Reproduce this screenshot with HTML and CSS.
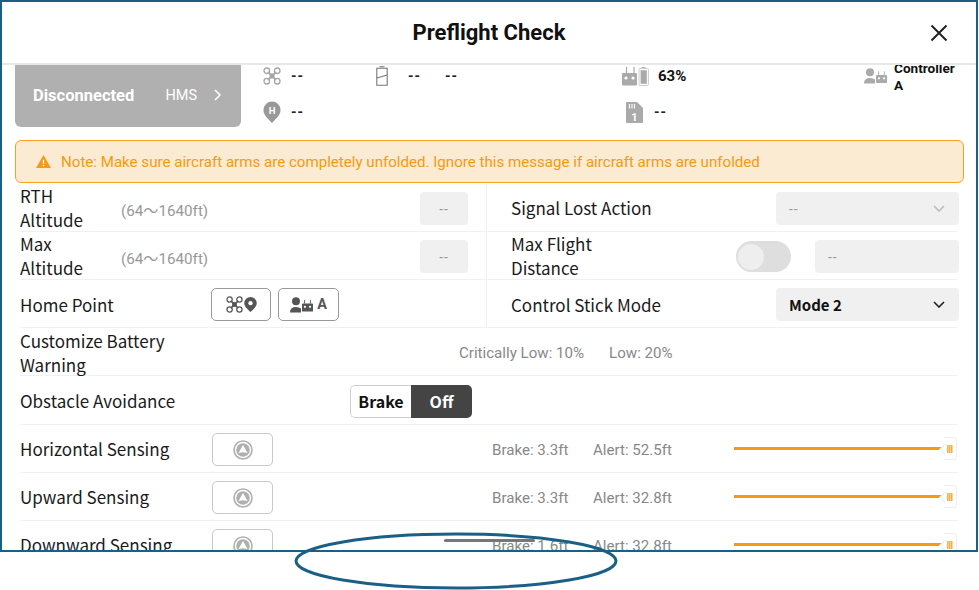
FILE: index.html
```html
<!DOCTYPE html>
<html lang="en">
<head>
    <meta charset="UTF-8">
    <meta name="viewport" content="width=device-width, initial-scale=1.0">
    <title>Preflight Check</title>
    <link rel="stylesheet" href="styles.css">
</head>
<body>

<svg width="0" height="0" class="defs">
    <symbol id="drone" viewBox="0 0 18 18">
        <g fill="none" stroke="currentColor" stroke-width="1.3">
            <circle cx="3.8" cy="3.8" r="2.8"/>
            <circle cx="14.200" cy="3.8" r="2.8"/>
            <circle cx="3.8" cy="14.200" r="2.8"/>
            <circle cx="14.200" cy="14.200" r="2.8"/>
            <path d="M5 5l8 8M13 5l-8 8" stroke-width="1.700"/>
        </g>
        <rect x="6.5" y="6.5" width="5" height="5" fill="currentColor"/>
    </symbol>
    <symbol id="sensor" viewBox="0 0 20 20">
        <circle cx="10" cy="10" r="9" fill="none" stroke="currentColor" stroke-width="1.600"/>
        <circle cx="10" cy="10" r="6.800" fill="currentColor"/>
        <path d="M10 5l4.600 8.300q-4.600-2-9.200 0z" fill="#fff"/>
    </symbol>
    <symbol id="remote" viewBox="0 0 15 16">
        <path d="M3.5 0v5M11.5 0v5" stroke="currentColor" stroke-width="1.2"/>
        <path d="M1 5h13a1 1 0 0 1 1 1v9a1 1 0 0 1-1 1H1a1 1 0 0 1-1-1V6a1 1 0 0 1 1-1z" fill="currentColor"/>
        <circle cx="4" cy="9.5" r="1.5" fill="#fff"/>
        <circle cx="11" cy="9.5" r="1.5" fill="#fff"/>
    </symbol>
</svg>

<div class="screen">
    <div class="dialog">
        <header class="dialog-head">
            <h1>Preflight Check</h1>
            <svg class="close" viewBox="0 0 18 18" width="18" height="18">
                <path d="M1.5 1.5l15 15M16.5 1.5l-15 15" stroke="#222" stroke-width="2" fill="none"/>
            </svg>
        </header>

        <div class="dialog-body">
            <div class="status">
                <div class="status-card">
                    <b>Disconnected</b>
                    <span class="hms">HMS</span>
                    <svg class="chevron" viewBox="0 0 8 12" width="8" height="12">
                        <path d="M1 1l5 5-5 5" stroke="#fff" stroke-width="1.5" fill="none"/>
                    </svg>
                </div>
                <div class="status-grid">
                    <div class="stat stat-a">
                        <svg class="ico-grey" width="18" height="18"><use href="#drone"/></svg>
                        <span class="dash">--</span>
                    </div>
                    <div class="stat stat-b">
                        <svg viewBox="0 0 12 20" width="12" height="20">
                            <path d="M3.5 .8h5M.8 2.300h10.400v17H.8zM.8 12l10.400-3" fill="none" stroke="#777" stroke-width="1.100"/>
                        </svg>
                        <span class="dash">--</span>
                        <span class="dash dash-far">--</span>
                    </div>
                    <div class="stat stat-c">
                        <svg viewBox="0 0 27 19" width="27" height="19">
                            <path d="M4.500 0v6M12 0v6" stroke="#aaa" stroke-width="1.200"/>
                            <rect x="0" y="6" width="15" height="12.500" rx="1" fill="#aaa"/>
                            <circle cx="4" cy="11" r="1.600" fill="#fff"/>
                            <circle cx="11" cy="11" r="1.600" fill="#fff"/>
                            <path d="M19.500 .6h4" stroke="#aaa"/>
                            <rect x="17" y="1.500" width="9.400" height="17" rx="1" fill="#fff" stroke="#ccc"/>
                            <rect x="18.600" y="3.200" width="6.200" height="13.600" fill="#aaa"/>
                        </svg>
                        <b class="percent">63%</b>
                    </div>
                    <div class="stat stat-d">
                        <svg class="person-rc" viewBox="0 0 23 16" width="23" height="16">
                            <circle cx="6" cy="4.200" r="4" fill="#aaa"/>
                            <path d="M0 15.500q0-5.500 6-5.500 3.200 0 5 1.500v4z" fill="#aaa"/>
                            <svg x="12" y="3" width="11" height="12.500" color="#aaa"><use href="#remote"/></svg>
                        </svg>
                        <b class="controller">Controller<br>A</b>
                    </div>
                    <div class="stat stat-a">
                        <svg viewBox="0 0 18 22" width="18" height="22">
                            <path d="M9 22C5 17.500.5 14.500.5 9a8.500 8.500 0 0 1 17 0C17.500 14.500 13 17.500 9 22z" fill="#999"/>
                            <text x="9" y="12.500" class="pin-h">H</text>
                        </svg>
                        <span class="dash">--</span>
                    </div>
                    <div class="stat stat-b"></div>
                    <div class="stat stat-sd">
                        <svg viewBox="0 0 17 21" width="17" height="21">
                            <path d="M1 0h10l6 6v14a1 1 0 0 1-1 1H1a1 1 0 0 1-1-1V1a1 1 0 0 1 1-1z" fill="#aaa"/>
                            <path d="M3.500 2v4.500M6 2v4.500M8.500 2v4.500" stroke="#fff" stroke-width="1.100"/>
                            <text x="8.500" y="18.500" class="sd-num">1</text>
                        </svg>
                        <span class="dash">--</span>
                    </div>
                    <div class="stat stat-d"></div>
                </div>
            </div>

            <div class="notice">
                <svg viewBox="0 0 16 14" width="15" height="13">
                    <path d="M8 0l8 14H0z" fill="#f59a12"/>
                    <path d="M8 5v4.500M8 10.500v1.500" stroke="#fff" stroke-width="1.400"/>
                </svg>
                <span>Note: Make sure aircraft arms are completely unfolded. Ignore this message if aircraft arms are unfolded</span>
            </div>

            <div class="split">
                <div class="row cell-left">
                    <div class="label label-up label-narrow">RTH<br>Altitude</div>
                    <div class="range">(64～1640ft)</div>
                    <div class="input input-small">--</div>
                </div>
                <div class="row cell-right">
                    <div class="label label-up">Signal Lost Action</div>
                    <div class="input select">
                        <span>--</span>
                        <svg viewBox="0 0 12 7" width="12" height="7"><path d="M1 1l5 5 5-5" stroke="#bbb" stroke-width="1.500" fill="none"/></svg>
                    </div>
                </div>
                <div class="row cell-left">
                    <div class="label label-up label-narrow">Max<br>Altitude</div>
                    <div class="range">(64～1640ft)</div>
                    <div class="input input-small">--</div>
                </div>
                <div class="row cell-right">
                    <div class="label label-up label-flight">Max Flight<br>Distance</div>
                    <div class="toggle"><i></i></div>
                    <div class="input input-wide">--</div>
                </div>
                <div class="row cell-left">
                    <div class="label label-home">Home Point</div>
                    <div class="btn-outline dark">
                        <svg width="17" height="17" color="#555"><use href="#drone"/></svg>
                        <svg viewBox="0 0 12 14" width="13" height="15">
                            <path d="M6 14C3 11 .2 9 .2 5.800a5.800 5.800 0 0 1 11.600 0C11.800 9 9 11 6 14z" fill="#555"/>
                            <circle cx="6" cy="5.800" r="2" fill="#fff"/>
                        </svg>
                    </div>
                    <div class="btn-outline dark">
                        <svg viewBox="0 0 23 16" width="23" height="16">
                            <circle cx="6" cy="4.200" r="4" fill="#555"/>
                            <path d="M0 15.500q0-5.500 6-5.500 3.200 0 5 1.500v4z" fill="#555"/>
                            <svg x="12" y="2" width="11" height="13.500" color="#555"><use href="#remote"/></svg>
                        </svg>
                        <b class="btn-a">A</b>
                    </div>
                </div>
                <div class="row cell-right">
                    <div class="label">Control Stick Mode</div>
                    <div class="input select select-on">
                        <b>Mode 2</b>
                        <svg viewBox="0 0 12 7" width="12" height="7"><path d="M1 1l5 5 5-5" stroke="#222" stroke-width="1.600" fill="none"/></svg>
                    </div>
                </div>
            </div>

            <div class="row battery-row">
                <div class="label label-batt">Customize Battery Warning</div>
                <span class="info info-crit">Critically Low: 10%</span>
                <span class="info">Low: 20%</span>
            </div>

            <div class="row avoid-row">
                <div class="label">Obstacle Avoidance</div>
                <div class="segment">
                    <span class="seg-off">Brake</span>
                    <span class="seg-on">Off</span>
                </div>
            </div>

            <div class="row sense-row">
                <div class="label label-up">Horizontal Sensing</div>
                <div class="btn-outline"><svg width="20" height="20" color="#b0b0b0"><use href="#sensor"/></svg></div>
                <span class="info brake">Brake: 3.3ft</span>
                <span class="info">Alert: 52.5ft</span>
                <div class="slider"><div class="track"></div><div class="thumb"><i></i></div></div>
            </div>
            <div class="row sense-row">
                <div class="label label-up">Upward Sensing</div>
                <div class="btn-outline"><svg width="20" height="20" color="#b0b0b0"><use href="#sensor"/></svg></div>
                <span class="info brake">Brake: 3.3ft</span>
                <span class="info">Alert: 32.8ft</span>
                <div class="slider"><div class="track"></div><div class="thumb"><i></i></div></div>
            </div>
            <div class="row sense-row">
                <div class="label label-up">Downward Sensing</div>
                <div class="btn-outline"><svg width="20" height="20" color="#b0b0b0"><use href="#sensor"/></svg></div>
                <span class="info brake">Brake: 1.6ft</span>
                <span class="info">Alert: 32.8ft</span>
                <div class="slider"><div class="track"></div><div class="thumb"><i></i></div></div>
            </div>
        </div>

        <div class="home-bar"></div>
    </div>

    <svg class="callout" viewBox="0 0 326 58" width="326" height="58">
        <ellipse cx="163" cy="29" rx="160" ry="27" fill="none" stroke="#1a5f85" stroke-width="3"/>
    </svg>
</div>

</body>
</html>
```

FILE: styles.css
```css
* {
    box-sizing: border-box;
}
body {
    margin: 0;
    background: #fff;
    font-family: Roboto, "Noto Sans CJK SC", Arial, sans-serif;
    color: #111;
}
.defs {
    position: absolute;
}
.screen {
    position: relative;
    width: 979px;
    height: 590px;
    overflow: hidden;
}
.dialog {
    position: relative;
    width: 978px;
    height: 552px;
    border: 2px solid #1a5f85;
    overflow: hidden;
    background: #fff;
}
.dialog-head {
    display: flex;
    align-items: center;
    justify-content: center;
    height: 63px;
    border-bottom: 2px solid #e8e8e8;
    position: relative;
    z-index: 1;
    background: #fff;
}
.dialog-head h1 {
    margin: 0;
    font-size: 22px;
    font-weight: 700;
    color: #111;
}
.close {
    position: absolute;
    right: 28px;
    top: 22px;
}
.dialog-body {
    height: 487px;
    overflow: hidden;
}

/* status block */
.status {
    display: flex;
    height: 76px;
    margin-top: -14px;
    padding-left: 13px;
}
.status-card {
    flex: none;
    display: flex;
    align-items: center;
    width: 226px;
    height: 76px;
    padding: 12px 19px 0 18px;
    background: #b0b0b0;
    border-radius: 6px;
    color: #fff;
}
.status-card b {
    font-size: 16.5px;
}
.hms {
    margin-left: auto;
    font-size: 14.5px;
}
.chevron {
    margin-left: 17px;
}
.status-grid {
    display: grid;
    grid-template-columns: 113px 246px 242px 113px;
    grid-template-rows: 36px 36px;
    padding: 7px 0 0 22px;
    height: 80px;
}
.stat {
    display: flex;
    align-items: center;
    gap: 10px;
    height: 36px;
}
.stat-b {
    gap: 20px;
}
.stat-c {
    gap: 9px;
}
.stat-sd {
    gap: 11px;
    padding-left: 4px;
}
.ico-grey {
    color: #a5a5a5;
}
.dash {
    font-size: 14px;
    font-weight: 700;
    color: #222;
    letter-spacing: 1px;
}
.dash-far {
    margin-left: 4px;
}
.percent {
    font-size: 15px;
}
.controller {
    font-size: 13.6px;
    line-height: 17px;
    position: relative;
    top: 1px;
}
.person-rc {
    margin-right: -3px;
}
.pin-h {
    font: 700 9.5px Roboto, sans-serif;
    fill: #fff;
    text-anchor: middle;
}
.sd-num {
    font: 700 11px Roboto, sans-serif;
    fill: #fff;
    text-anchor: middle;
}

/* warning */
.notice {
    display: flex;
    align-items: center;
    gap: 10px;
    height: 43px;
    margin: 13px 12px 0 13px;
    padding-left: 20px;
    background: #fbebd2;
    border: 1.5px solid #f7a11f;
    border-radius: 6px;
    color: #f59a12;
    font-size: 15.1px;
}

/* rows */
.row {
    display: flex;
    align-items: center;
    height: 48px;
    padding-top: 2px;
    border-bottom: 1px solid #f0f0f0;
}
.label {
    font-family: "Noto Sans CJK SC", "Noto Sans", sans-serif;
    font-size: 17px;
    line-height: 24px;
    color: #1a1a1a;
}
.label-up {
    margin-bottom: 2px;
}
.split {
    display: grid;
    grid-template-columns: 467px 470px;
    margin: 1px 0 0 18px;
}
.cell-left {
    border-right: 1px solid #f0f0f0;
}
.cell-right {
    padding-left: 24px;
}
.label-narrow {
    width: 101px;
}
.label-home {
    width: 191px;
}
.range {
    width: 299px;
    font-size: 15.2px;
    color: #999;
}
.input {
    display: flex;
    align-items: center;
    height: 33px;
    background: #f0f0f0;
    border-radius: 4px;
    font-size: 14px;
    color: #999;
    letter-spacing: 1px;
}
.input-small {
    justify-content: center;
    width: 48px;
}
.select {
    justify-content: space-between;
    width: 183px;
    padding: 0 14px 0 13px;
    margin-left: auto;
    margin-right: -2px;
}
.select-on {
    color: #111;
    font-family: "Noto Sans CJK SC", "Noto Sans", sans-serif;
    font-size: 15px;
    letter-spacing: 0;
}
.label-flight {
    width: 150px;
}
.toggle {
    display: flex;
    align-items: center;
    width: 55px;
    height: 31px;
    margin-left: 75px;
    padding: 2px;
    background: #dedede;
    border-radius: 16px;
}
.toggle i {
    width: 26px;
    height: 26px;
    background: #eee;
    border-radius: 50%;
}
.input-wide {
    width: 144px;
    margin-left: 24px;
    margin-right: -2px;
    padding-left: 13px;
}
.btn-outline {
    display: flex;
    align-items: center;
    justify-content: center;
    gap: 1px;
    width: 61px;
    height: 33px;
    border: 1.5px solid #c8c8c8;
    border-radius: 5px;
}
.btn-outline.dark {
    border-color: #999;
    width: 60px;
    margin-right: 7px;
}
.btn-outline.dark + .btn-outline.dark {
    width: 61px;
}
.btn-a {
    font-size: 14.5px;
    color: #555;
    margin-left: 3px;
}
.info {
    font-size: 15.1px;
    color: #888;
}
.battery-row {
    margin-left: 18px;
    width: 937px;
}
.label-batt {
    width: 170px;
}
.info-crit {
    margin-left: 269px;
    margin-right: 25px;
}
.avoid-row {
    height: 49px;
    margin-left: 18px;
    width: 937px;
}
.avoid-row .label {
    width: 330px;
}
.segment {
    display: flex;
    height: 33px;
    width: 122px;
    border-radius: 5px;
    overflow: hidden;
    font-family: "Noto Sans CJK SC", "Noto Sans", sans-serif;
    font-size: 16px;
    font-weight: 700;
}
.segment span {
    display: flex;
    align-items: center;
    justify-content: center;
    width: 61px;
}
.seg-off {
    border: 1px solid #ccc;
    border-right: 0;
    border-radius: 5px 0 0 5px;
}
.seg-on {
    background: #444;
    color: #fff;
}
.sense-row {
    display: grid;
    grid-template-columns: 192px 61px 219px 101px 141px 223px;
    margin-left: 18px;
    width: 938px;
}
.brake {
    grid-column: 4;
}
.slider {
    display: flex;
    align-items: center;
    margin-bottom: 2px;
}
.track {
    flex: 1;
    height: 3px;
    background: #f59a12;
}
.thumb {
    display: flex;
    align-items: center;
    justify-content: center;
    width: 13px;
    height: 23px;
    background: #fff;
    border: 1px solid #eee;
    border-left: 0;
    border-radius: 0 3px 3px 0;
    position: relative;
}
.thumb::before {
    content: "";
    position: absolute;
    left: -3px;
    top: 7px;
    width: 8px;
    height: 8px;
    background: #fff;
    border-left: 1px solid #eee;
    border-bottom: 1px solid #eee;
    transform: rotate(45deg);
}
.thumb i {
    position: relative;
    width: 6px;
    height: 8px;
    background: repeating-linear-gradient(90deg, #f6ad45 0 1px, #fbd298 1px 2px);
}

/* overlays */
.home-bar {
    position: absolute;
    left: 442px;
    top: 537px;
    width: 91px;
    height: 3px;
    background: #777;
    border-radius: 2px;
}
.callout {
    position: absolute;
    left: 293px;
    top: 532px;
}
```
